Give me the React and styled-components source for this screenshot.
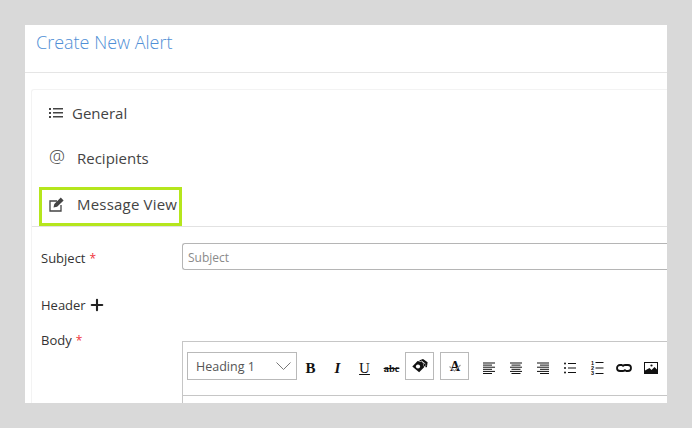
import React from "react";
import styled, { createGlobalStyle } from "styled-components";
import { Plus } from "lucide-react";

const GlobalStyle = createGlobalStyle`
  html, body {
    margin: 0;
    padding: 0;
    background-color: #d9d9d9;
  }
  body {
    font-family: "Open Sans", "Liberation Sans", sans-serif;
    color: #333;
  }
`;

const Page = styled.div`
  width: 692px;
  height: 428px;
  padding: 25px;
  box-sizing: border-box;
  overflow: hidden;
`;

const Panel = styled.div`
  width: 642px;
  height: 378px;
  background-color: white;
  overflow: hidden;
`;

const PanelHeader = styled.div`
  height: 48px;
  box-sizing: border-box;
  border-bottom: 1px solid #e5e5e5;
  padding: 5px 0 0 11px;
  margin-bottom: 16px;
`;

const Title = styled.h1`
  margin: 0;
  font-size: 18px;
  font-weight: 300;
  line-height: 25px;
  color: #4f8fd6;
`;

const Card = styled.div`
  margin-left: 6px;
  height: 320px;
  border-top: 1px solid #f3f3f3;
  border-left: 1px solid #f3f3f3;
  border-radius: 3px 0 0 0;
`;

const TabList = styled.div`
  display: flex;
  flex-direction: column;
  border-bottom: 1px solid #e2e2e2;
  height: 137px;
  box-sizing: border-box;
  padding-left: 7px;
`;

const Tab = styled.div`
  display: flex;
  align-items: center;
  width: 143px;
  box-sizing: border-box;
  padding-left: 7px;
  padding-bottom: ${({ $active }) => ($active ? "5px" : "0")};
  font-size: 15px;
  letter-spacing: ${({ $active }) => ($active ? "0.2px" : "0")};
  color: #444;
  white-space: nowrap;
  border: 3px solid ${({ $active }) => ($active ? "#b5e61d" : "transparent")};
  margin-top: ${({ $active }) => ($active ? "7px" : "0")};
  height: ${({ $active }) => ($active ? "39px" : "45px")};
`;

const TabIcon = styled.span`
  display: flex;
  align-items: center;
  width: ${({ $wide }) => ($wide ? "28px" : "23px")};
  color: #444;
`;

const AtIcon = styled(TabIcon)`
  font-size: 18px;
  font-weight: 300;
  margin-top: -3px;
`;

const FormRow = styled.div`
  display: grid;
  grid-template-columns: 141px 1fr;
  padding-left: 9px;
  font-size: 13px;
`;

const SubjectRow = styled(FormRow)`
  margin-top: 16px;
  align-items: center;
`;

const HeaderRow = styled(FormRow)`
  margin-top: 26px;
  align-items: center;
`;

const BodyRow = styled(FormRow)`
  margin-top: 17px;
  align-items: start;
`;

const Label = styled.label`
  display: flex;
  align-items: center;
  gap: 4px;
  color: #333;
  padding-top: ${({ $offset }) => $offset || 0}px;
`;

const Required = styled.span`
  color: #f0323c;
  font-size: 12px;
`;

const AddIcon = styled(Plus)`
  margin-left: -2px;
  color: #222;
`;

const Input = styled.input`
  height: 27px;
  box-sizing: border-box;
  width: 100%;
  border: 1px solid #b5b5b5;
  border-right: 0;
  border-radius: 3px 0 0 3px;
  padding: 1px 5px 0;
  font-family: inherit;
  font-size: 12px;
  &::placeholder {
    color: #8a8a8a;
  }
`;

const Editor = styled.div`
  border: 1px solid #c6c6c6;
  border-right: 0;
  margin-top: 10px;
`;

const Toolbar = styled.div`
  display: flex;
  align-items: flex-start;
  height: 54px;
  box-sizing: border-box;
  padding: 10px 0 0 4px;
  border-bottom: 1px solid #c6c6c6;
`;

const EditorBody = styled.div`
  height: 40px;
`;

const Select = styled.div`
  width: 110px;
  height: 28px;
  box-sizing: border-box;
  border: 1px solid #b9b9b9;
  display: flex;
  align-items: center;
  justify-content: space-between;
  padding: 0 5px 0 8px;
  font-size: 12.5px;
  color: #555;
`;

const ToolButton = styled.button`
  width: 27px;
  height: 28px;
  padding: 0;
  flex: none;
  box-sizing: border-box;
  background: white;
  border: 0;
  margin-top: 2px;
  display: flex;
  align-items: center;
  justify-content: center;
  font-family: "Liberation Serif", serif;
  font-size: 15px;
  color: #111;
`;

const BoxedButton = styled(ToolButton)`
  width: 29px;
  border: 1px solid #b9b9b9;
  margin-top: 0;
  margin-left: ${({ $gap }) => $gap || 0}px;
  margin-right: ${({ $after }) => $after || 0}px;
`;

const BoldText = styled.b``;
const ItalicText = styled.i`
  font-weight: 700;
`;
const UnderText = styled.u``;
const StrikeText = styled.s`
  font-size: 10.5px;
  font-weight: 700;
`;

const Icon = ({ children, size = 16 }) => (
  <svg width={size} height={size} viewBox="0 0 16 16" fill="#111">
    {children}
  </svg>
);

const Lines = ({ rows }) => (
  <Icon>
    {rows.map(([x, w], i) => (
      <rect key={i} x={x} y={2.5 + i * 2.1} width={w} height="1" />
    ))}
  </Icon>
);

const alignLeft = [[2, 12], [2, 9], [2, 12], [2, 9], [2, 12], [2, 9]];
const alignCenter = [[2, 12], [3.5, 9], [2, 12], [3.5, 9], [2, 12], [3.5, 9]];
const alignRight = [[2, 12], [5, 9], [2, 12], [5, 9], [2, 12], [5, 9]];

const App = () => {
  return (
    <Page>
      <GlobalStyle />
      <Panel>
        <PanelHeader>
          <Title>Create New Alert</Title>
        </PanelHeader>
        <Card>
          <TabList>
            <Tab>
              <TabIcon>
                <svg width="14" height="12" viewBox="0 0 14 12" fill="#444">
                  <rect x="0" y="1" width="2" height="2" />
                  <rect x="0" y="5" width="2" height="2" />
                  <rect x="0" y="9" width="2" height="2" />
                  <rect x="4" y="1" width="10" height="1.5" />
                  <rect x="4" y="5" width="10" height="1.5" />
                  <rect x="4" y="9" width="10" height="1.5" />
                </svg>
              </TabIcon>
              General
            </Tab>
            <Tab>
              <AtIcon $wide>@</AtIcon>
              Recipients
            </Tab>
            <Tab $active>
              <TabIcon $wide>
                <svg width="15" height="15" viewBox="0 0 15 15" fill="none" stroke="#444" strokeWidth="1.3">
                  <path d="M8 4H1v10h11V8" />
                  <path d="M4.5 10.5l.8-3.4L11.8.6l2.8 2.8-6.5 6.4z" fill="#444" stroke="none" />
                </svg>
              </TabIcon>
              Message View
            </Tab>
          </TabList>
          <SubjectRow>
            <Label $offset={3}>
              Subject <Required>*</Required>
            </Label>
            <Input placeholder="Subject" />
          </SubjectRow>
          <HeaderRow>
            <Label>
              Header <AddIcon size={18} strokeWidth={2.8} />
            </Label>
          </HeaderRow>
          <BodyRow>
            <Label>
              Body <Required>*</Required>
            </Label>
            <Editor>
              <Toolbar>
                <Select>
                  Heading 1
                  <svg width="15" height="8" viewBox="0 0 15 8" fill="none" stroke="#777">
                    <path d="M.5.5l7 7 7-7" />
                  </svg>
                </Select>
                <ToolButton>
                  <BoldText>B</BoldText>
                </ToolButton>
                <ToolButton>
                  <ItalicText>I</ItalicText>
                </ToolButton>
                <ToolButton>
                  <UnderText>U</UnderText>
                </ToolButton>
                <ToolButton>
                  <StrikeText>abc</StrikeText>
                </ToolButton>
                <BoxedButton>
                  <Icon>
                    <path d="M.3 8.5L5.6 3l5 1.2 1.5 5-5 5z" />
                    <circle cx="6" cy="8.5" r="2.1" fill="white" />
                    <path d="M7 2.6L11 1l4.6 3.2-.7 5-2.6-.3-1.2-4.6z" />
                    <path d="M9.5 2.8l4 3.3M12 9l2.2-1.4" stroke="white" strokeWidth=".8" />
                  </Icon>
                </BoxedButton>
                <BoxedButton $gap={6} $after={6}>
                  <Icon>
                    <text x="8" y="12.5" textAnchor="middle" fontFamily="Liberation Serif" fontWeight="700" fontSize="14">
                      A
                    </text>
                    <path d="M2.5 8.5l5 4.5 6-6" fill="none" stroke="#999" strokeWidth="1.1" />
                  </Icon>
                </BoxedButton>
                <ToolButton>
                  <Lines rows={alignLeft} />
                </ToolButton>
                <ToolButton>
                  <Lines rows={alignCenter} />
                </ToolButton>
                <ToolButton>
                  <Lines rows={alignRight} />
                </ToolButton>
                <ToolButton>
                  <Icon>
                    <circle cx="3" cy="3.5" r="1" />
                    <circle cx="3" cy="8" r="1" />
                    <circle cx="3" cy="12.5" r="1" />
                    <rect x="6" y="3" width="8" height="1" />
                    <rect x="6" y="7.5" width="8" height="1" />
                    <rect x="6" y="12" width="8" height="1" />
                  </Icon>
                </ToolButton>
                <ToolButton>
                  <Icon>
                    <text x="2" y="5" fontFamily="Liberation Sans" fontWeight="700" fontSize="5.5">1</text>
                    <text x="2" y="10" fontFamily="Liberation Sans" fontWeight="700" fontSize="5.5">2</text>
                    <text x="2" y="15" fontFamily="Liberation Sans" fontWeight="700" fontSize="5.5">3</text>
                    <rect x="6.5" y="2" width="8" height="1" />
                    <rect x="6.5" y="7.5" width="8" height="1" />
                    <rect x="6.5" y="13" width="8" height="1" />
                  </Icon>
                </ToolButton>
                <ToolButton>
                  <Icon>
                    <path
                      d="M6.5 5H4a3 3 0 0 0 0 6h3a3 3 0 0 0 2.6-1.5M9.5 11H12a3 3 0 0 0 0-6H9a3 3 0 0 0-2.6 1.5"
                      fill="none"
                      stroke="#111"
                      strokeWidth="1.8"
                    />
                  </Icon>
                </ToolButton>
                <ToolButton>
                  <Icon>
                    <path d="M1 2h14v12H1z" />
                    <path d="M2 3h12v6.5l-2.5-2.5-3 3-2-2L2 10.5z" fill="white" />
                    <circle cx="8.5" cy="5.5" r="1.1" />
                  </Icon>
                </ToolButton>
              </Toolbar>
              <EditorBody />
            </Editor>
          </BodyRow>
        </Card>
      </Panel>
    </Page>
  );
};

export default App;
